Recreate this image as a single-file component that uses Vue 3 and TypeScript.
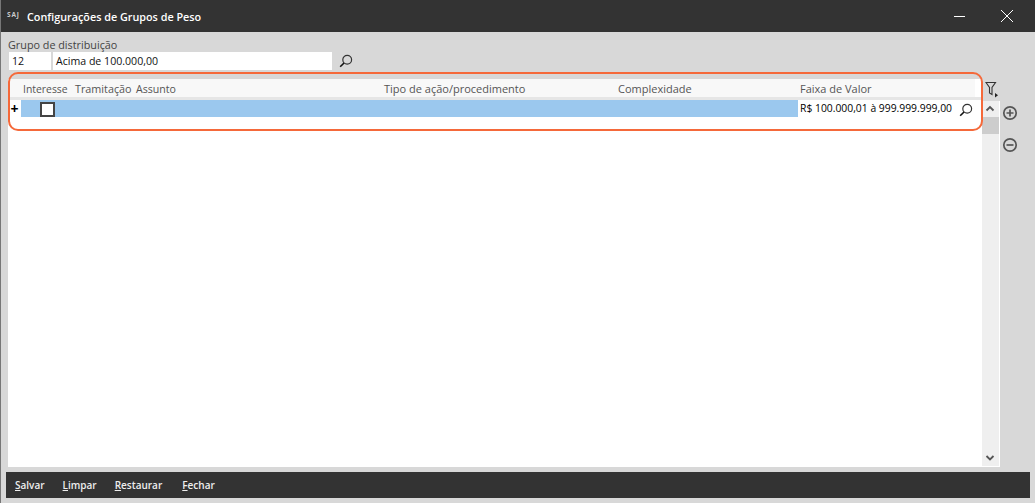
<script setup lang="ts">
const columns = [
  { label: 'Interesse', width: 52, size: 10.4 },
  { label: 'Tramitação', width: 61, size: 10.8 },
  { label: 'Assunto', width: 248, size: 10.6 },
  { label: 'Tipo de ação/procedimento', width: 234, size: 11 },
  { label: 'Complexidade', width: 182, size: 11 },
  { label: 'Faixa de Valor', width: 175, size: 11 },
]
const actions = [
  { key: 'S', rest: 'alvar' },
  { key: 'L', rest: 'impar' },
  { key: 'R', rest: 'estaurar' },
  { key: 'F', rest: 'echar' },
]
</script>

<template>
  <div class="window">
    <header class="titlebar">
      <span class="logo">SAJ</span>
      <span class="title">Configurações de Grupos de Peso</span>
      <svg class="win-btn min" width="14" height="14" viewBox="0 0 14 14"><path d="M1 7.5h11" stroke="#fff" stroke-width="1" /></svg>
      <svg class="win-btn close" width="14" height="14" viewBox="0 0 14 14"><path d="M1 1l12 12M13 1L1 13" stroke="#fff" stroke-width="1" /></svg>
    </header>

    <main class="content">
      <label class="field-label">Grupo de distribuição</label>
      <div class="field-row">
        <div class="input code">12</div>
        <div class="input desc">Acima de 100.000,00</div>
        <svg class="lens" width="14" height="14" viewBox="0 0 14 14"><circle cx="8.2" cy="5.8" r="4.4" fill="none" stroke="#333" stroke-width="1.2" /><path d="M5 9L1.2 12.8" stroke="#111" stroke-width="1.6" /></svg>
      </div>

      <div class="grid-wrap">
        <div class="grid-area">
          <div class="grid-head">
            <span v-for="c in columns" :key="c.label" class="th" :style="{ width: c.width + 'px', fontSize: c.size + 'px' }">{{ c.label }}</span>
          </div>
          <div class="grid-body">
            <div class="row">
              <span class="plus">+</span>
              <div class="selected"><span class="check"></span></div>
              <span class="value">R$ 100.000,01 à 999.999.999,00</span>
              <svg class="lens" width="14" height="14" viewBox="0 0 14 14"><circle cx="8.2" cy="5.8" r="4.4" fill="none" stroke="#333" stroke-width="1.2" /><path d="M5 9L1.2 12.8" stroke="#111" stroke-width="1.6" /></svg>
            </div>
          </div>
        </div>
        <div class="scroll-col">
          <svg class="filter" width="14" height="17" viewBox="0 0 14 17"><path d="M1 1.5h9.5L7 6.5V13.5L4.5 12V6.5z" fill="none" stroke="#333" stroke-width="1.1" /><path d="M10 12l3 2.2-3 2.2z" fill="#222" /></svg>
          <div class="scrollbar">
            <svg width="17" height="16" viewBox="0 0 17 16"><path d="M4.5 9.5l3.5-3.5 3.5 3.5" fill="none" stroke="#555" stroke-width="1.8" /></svg>
            <div class="thumb"></div>
            <div class="track"></div>
            <svg width="17" height="16" viewBox="0 0 17 16"><path d="M4.5 6l3.5 3.5L11.5 6" fill="none" stroke="#555" stroke-width="1.8" /></svg>
          </div>
        </div>
        <div class="side">
          <svg width="16" height="16" viewBox="0 0 16 16"><circle cx="8" cy="8" r="6.2" fill="none" stroke="#555" stroke-width="1.7" /><path d="M4.5 8h7M8 4.5v7" stroke="#555" stroke-width="1.7" /></svg>
          <svg width="16" height="16" viewBox="0 0 16 16"><circle cx="8" cy="8" r="6.2" fill="none" stroke="#555" stroke-width="1.7" /><path d="M4.5 8h7" stroke="#555" stroke-width="1.7" /></svg>
        </div>
        <div class="highlight"></div>
      </div>
    </main>

    <footer class="actions">
      <span v-for="a in actions" :key="a.key" class="action"><u>{{ a.key }}</u>{{ a.rest }}</span>
    </footer>
  </div>
</template>

<style>
html, body { margin: 0; background: #d8d8d8; }
</style>

<style scoped>
.window {
  width: 1035px;
  height: 503px;
  display: flex;
  flex-direction: column;
  box-sizing: border-box;
  border-left: 1px solid #777;
  background: #d8d8d8;
  font-family: "Open Sans", sans-serif;
  font-size: 10.8px;
  color: #111;
  overflow: hidden;
}
.titlebar {
  height: 32px;
  flex: none;
  margin-left: -1px;
  padding: 0 21px 0 7px;
  background: #333;
  color: #fff;
  display: flex;
  align-items: center;
}
.logo { font-size: 6.5px; font-weight: 700; color: #ccc; width: 20px; margin-top: -4px; letter-spacing: 0.8px; }
.title { font-weight: 600; flex: 1; font-size: 10.8px; }
.min { margin-right: 33px; }
.content {
  flex: 1;
  min-height: 0;
  padding: 6px 0 0 7px;
  display: flex;
  flex-direction: column;
}
.field-label { line-height: 14px; color: #444; }
.field-row { display: flex; align-items: center; gap: 2px; height: 18px; }
.input { height: 18px; line-height: 19px; background: #fff; box-sizing: border-box; padding-left: 3px; font-size: 10.6px; }
.code { width: 42px; margin-left: 1px; }
.desc { width: 279px; }
.lens { margin-left: 5px; }
.grid-wrap {
  position: relative;
  flex: 1;
  min-height: 0;
  display: flex;
  margin-top: 9px;
  margin-bottom: 5px;
}
.grid-area { width: 974px; display: flex; flex-direction: column; background: #fff; }
.grid-head {
  height: 18px;
  flex: none;
  box-sizing: border-box;
  background: #f8f8f8;
  display: flex;
  padding-left: 15px;
  margin-right: 7px;
  line-height: 20px;
  color: #555;
}
.th { flex: none; white-space: nowrap; }
.grid-body { flex: 1; background: #fff; border-top: 3px solid #e6e6e6; }
.row { display: flex; align-items: center; height: 17px; }
.plus { width: 13px; text-align: center; color: #000; font-weight: 700; font-size: 14px; line-height: 17px; }
.selected {
  width: 777px;
  height: 17px;
  background: #9bc8ee;
  display: flex;
  align-items: center;
  padding-left: 19px;
  box-sizing: border-box;
}
.check { width: 15px; height: 15px; margin-top: 2px; box-sizing: border-box; border: 2px solid #444; background: #fff; }
.value { margin-left: 2px; width: 153px; white-space: nowrap; font-size: 10.35px; line-height: 19px; color: #000; }
.row .lens { margin-left: 6px; margin-top: 2px; }
.scroll-col { width: 18px; display: flex; flex-direction: column; }
.filter { margin: 2px 0 3px 3px; flex: none; }
.scrollbar {
  flex: 1;
  background: #efefef;
  border-right: 1px solid #fff;
  border-bottom: 1px solid #fff;
  display: flex;
  flex-direction: column;
}
.scrollbar svg { flex: none; }
.thumb { height: 17px; background: #cdcdcd; }
.track { flex: 1; }
.side { width: 20px; display: flex; flex-direction: column; align-items: center; gap: 16px; padding-top: 26px; }
.highlight {
  position: absolute;
  left: 0;
  top: -7px;
  width: 971px;
  height: 55px;
  border: 2px solid #f5693a;
  border-radius: 10px;
  pointer-events: none;
}
.actions {
  height: 26px;
  flex: none;
  margin: 0 5px 5px 5px;
  background: #333;
  color: #eee;
  display: flex;
  align-items: center;
  padding-left: 9px;
  gap: 18px;
  font-weight: 600;
  font-size: 10px;
}
.action:last-child { margin-left: 2px; }
</style>
